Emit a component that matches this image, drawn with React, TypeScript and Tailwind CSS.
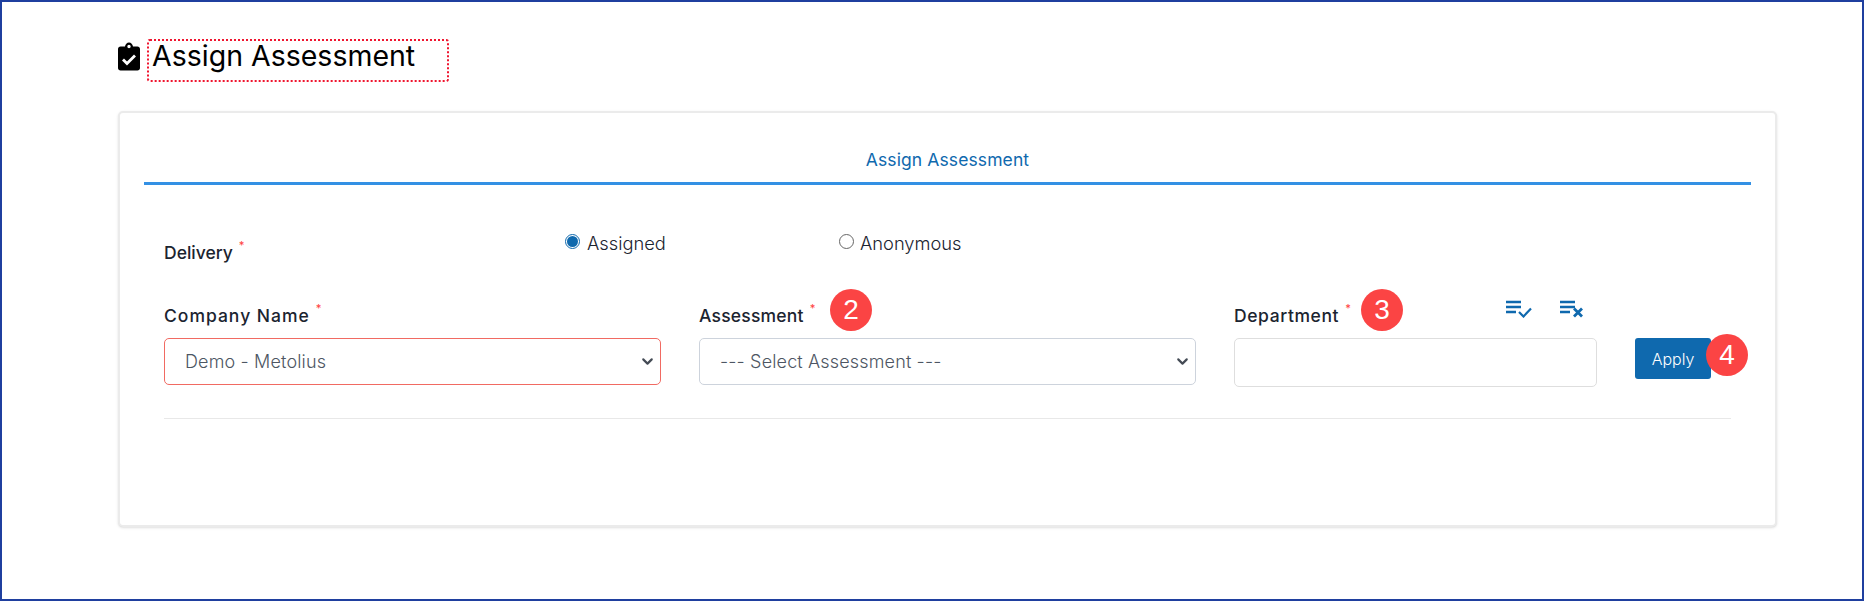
import { ChevronDown } from "lucide-react";

const font = "font-['Inter',sans-serif]";

function Badge({ n, className }: { n: string; className: string }) {
    return (
        <div className={`absolute flex h-[42px] w-[42px] items-center justify-center rounded-full bg-[#fb4444] text-[28px] text-white font-['Liberation_Sans',sans-serif] ${className}`}>
            {n}
        </div>
    );
}

function Label({ text, className = "" }: { text: string; className?: string }) {
    return (
        <div className={`flex h-[24px] items-center text-[17.5px] font-medium text-[#1b2430] ${className}`}>
            {text}
            <span className="relative top-[-8px] ml-[6px] text-[11px] text-[#f44]">*</span>
        </div>
    );
}

function FakeSelect({ text, className }: { text: string; className: string }) {
    return (
        <div className={`flex h-[47px] items-center justify-between rounded-[5px] border bg-white pl-[20px] pr-[4px] text-[18px] font-light tracking-[0.15px] text-[#4d5663] ${className}`}>
            <span>{text}</span>
            <ChevronDown size={17} strokeWidth={3} className="text-[#444b55]" />
        </div>
    );
}

function ListCheckIcon() {
    return (
        <svg width="26" height="18" viewBox="0 0 26 18" fill="none" stroke="#0f69ae" strokeWidth="2.4">
            <path d="M0 2h15M0 7h15M0 12h10" />
            <path d="M13 12l4.5 4.5L25 8.5" strokeWidth="2.2" />
        </svg>
    );
}

function ListXIcon() {
    return (
        <svg width="24" height="18" viewBox="0 0 24 18" fill="none" stroke="#0f69ae" strokeWidth="2.4">
            <path d="M0 2h15M0 7h15M0 12h10" />
            <path d="M14 8.500l8 8M22 8.500l-8 8" strokeWidth="2.8" />
        </svg>
    );
}

export default function App() {
    return (
        <div className={`h-[601px] w-[1864px] border-2 border-[#1f3f9f] bg-white pl-[116px] pt-[37px] ${font}`}>
            <div className="flex items-center">
                <svg width="22" height="29" viewBox="0 0 22 28" className="mb-[8px]">
                    <path fill="#000" fillRule="evenodd" d="M2.5 4H7c.3-2.200 2-4 4-4s3.700 1.800 4 4h4.500C20.900 4 22 5.100 22 6.500v19c0 1.400-1.100 2.500-2.500 2.500h-17C1.100 28 0 26.900 0 25.500v-19C0 5.100 1.100 4 2.500 4zM11 2.300a1.700 1.700 0 1 0 0 3.400 1.700 1.700 0 0 0 0-3.400z" />
                    <path fill="none" stroke="#fff" strokeWidth="2.800" d="M5 17l4 4 8-8" />
                </svg>
                <div className="ml-[7px] flex h-[43px] w-[302px] items-start rounded-[3px] border-2 border-dotted border-[#f0152f] pl-[3px] text-[28.5px] leading-[30px] text-black">
                    Assign Assessment
                </div>
            </div>

            <div className="mt-[29px] h-[416px] w-[1659px] rounded-[5px] border-2 border-[#ebebeb] bg-white px-[24px] shadow-sm">
                <div className="flex h-[72px] items-end justify-center border-b-[3px] border-[#3390e4] pb-[9px] text-[17.5px] font-normal tracking-[0.1px] text-[#0f69ae]">
                    Assign Assessment
                </div>

                <div className="px-[20px]">
                    <div className="flex h-[119px] items-start">
                        <div className="mt-[56px] w-[401px]">
                            <Label text="Delivery" />
                        </div>
                        <div className="mt-[45px] flex w-[274px] items-center gap-[7px] text-[18.3px] font-light text-[#1b2430]">
                            <span className="mb-[4px] flex h-[15px] w-[15px] items-center justify-center rounded-full border border-[#0f69ae]">
                                <span className="h-[11px] w-[11px] rounded-full bg-[#0f69ae]" />
                            </span>
                            Assigned
                        </div>
                        <div className="mt-[45px] flex items-center gap-[6px] text-[18.3px] font-light text-[#1b2430]">
                            <span className="mb-[4px] h-[15px] w-[15px] rounded-full border border-[#666]" />
                            Anonymous
                        </div>
                    </div>

                    <div className="flex">
                        <div className="relative w-[535px] pr-[38px]">
                            <Label text="Company Name" className="tracking-[1px]" />
                            <FakeSelect text="Demo - Metolius" className="mt-[10px] border-[#f16a62]" />
                        </div>
                        <div className="relative w-[535px] pr-[38px]">
                            <Label text="Assessment" className="tracking-[0.2px]" />
                            <FakeSelect text="--- Select Assessment ---" className="mt-[10px] border-[#cdd3dc]" />
                            <Badge n="2" className="left-[131px] top-[-15px]" />
                        </div>
                        <div className="relative w-[401px] pr-[38px]">
                            <Label text="Department" className="tracking-[0.6px]" />
                            <div className="mt-[10px] h-[49px] rounded-[5px] border border-[#dedede] bg-white" />
                            <Badge n="3" className="left-[127px] top-[-15px]" />
                            <div className="absolute left-[272px] top-[-4px] flex items-center gap-[28px]">
                                <ListCheckIcon />
                                <ListXIcon />
                            </div>
                        </div>
                        <div className="relative pt-[34px]">
                            <div className="flex h-[41px] w-[76px] items-center justify-center rounded-[3px] bg-[#0f69ae] text-[16px] font-light text-white">
                                Apply
                            </div>
                            <Badge n="4" className="left-[71px] top-[30px]" />
                        </div>
                    </div>

                    <div className="mt-[31px] h-[1px] w-[1567px] bg-[#e8e8e8]" />
                </div>
            </div>
        </div>
    );
}
